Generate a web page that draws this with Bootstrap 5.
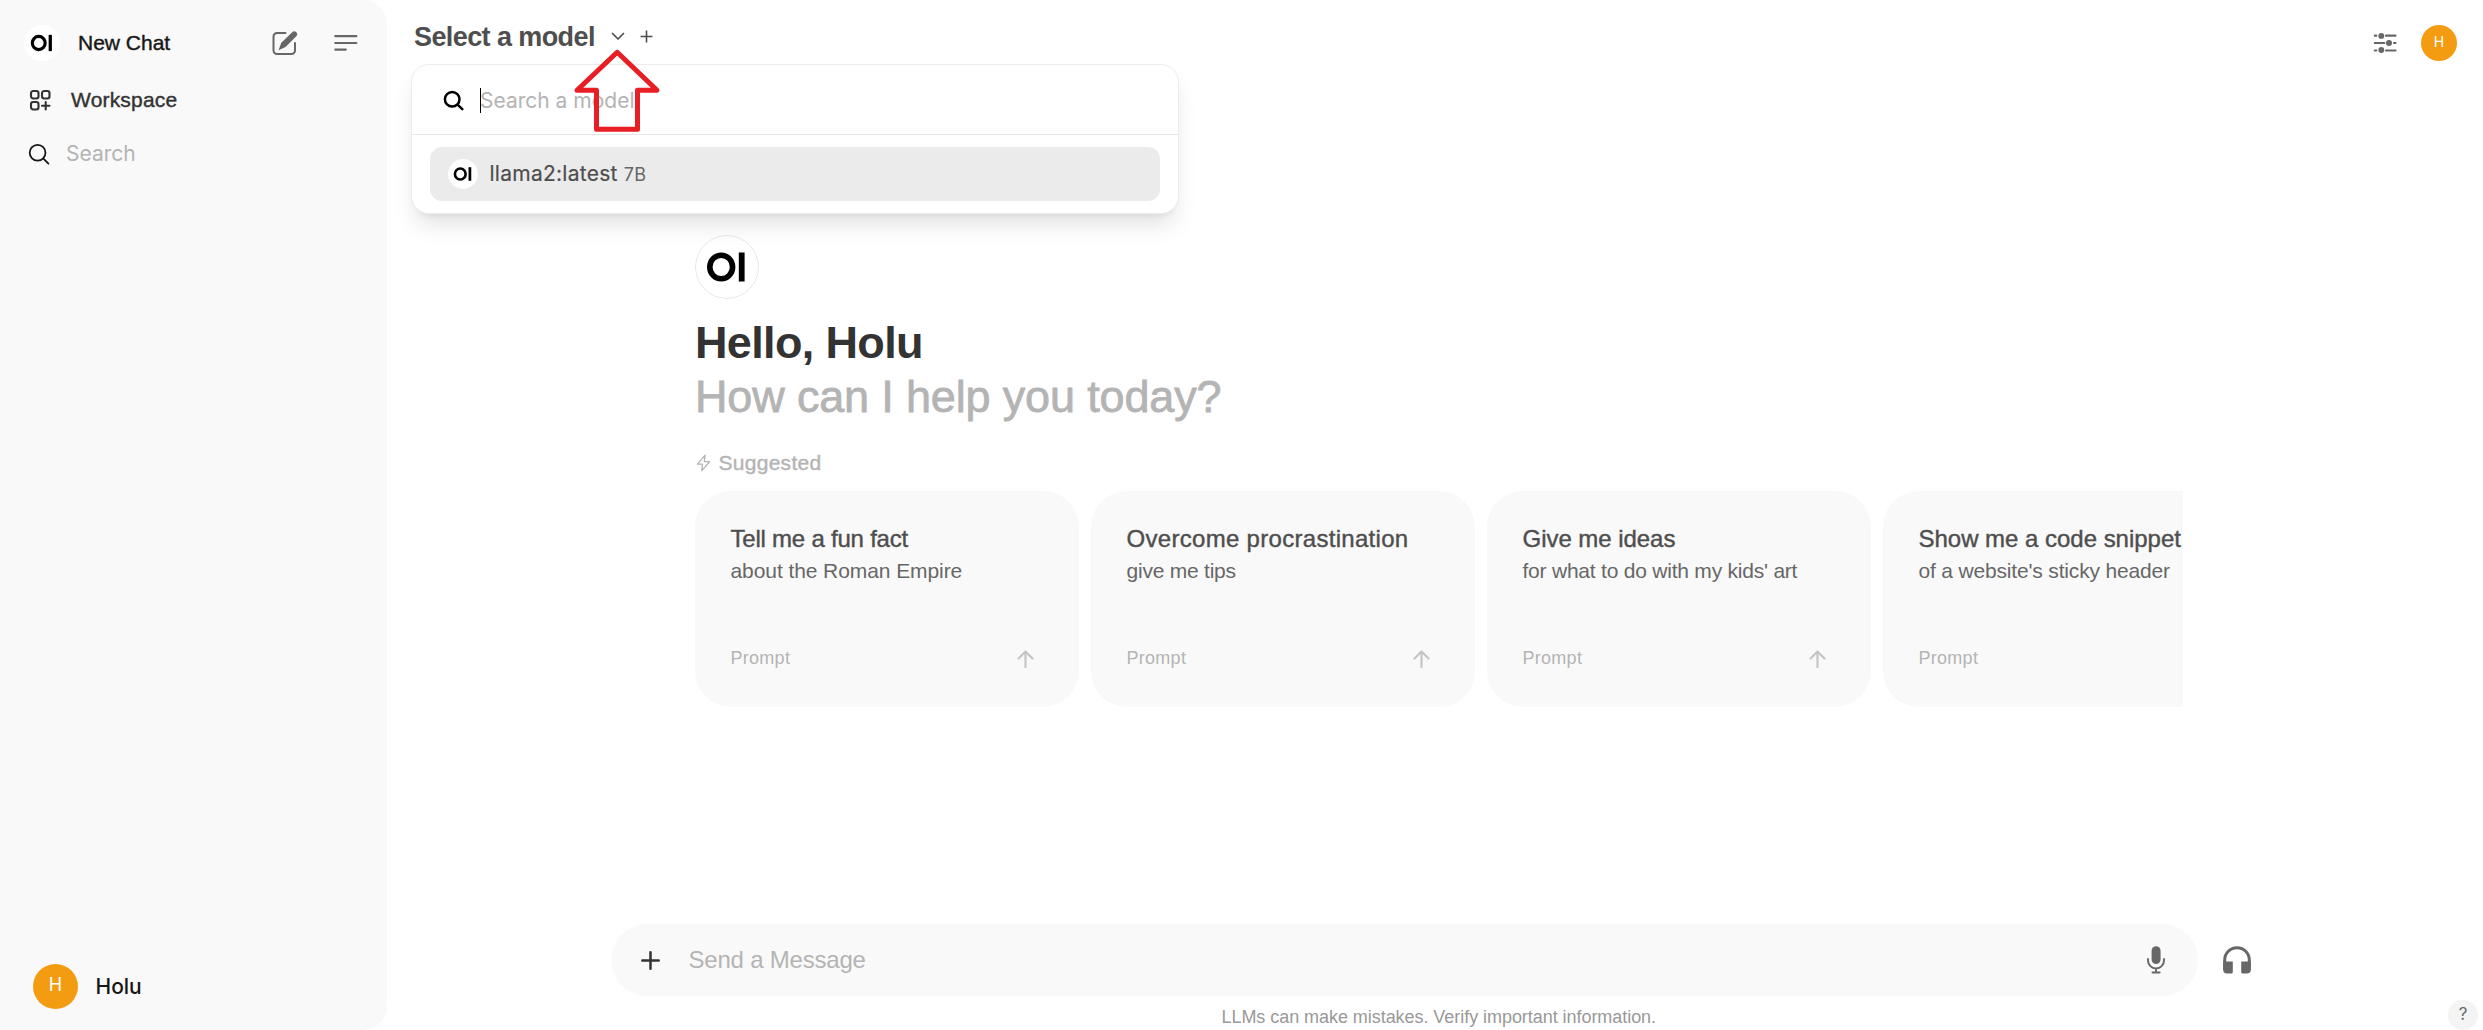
<!DOCTYPE html>
<html lang="en">
<head>
<meta charset="utf-8">
<title>New Chat</title>
<link href="https://cdn.jsdelivr.net/npm/bootstrap@5.3.0/dist/css/bootstrap.min.css" rel="stylesheet">
<style>
body{font-family:"Liberation Sans",Arial,sans-serif;font-size:21px;line-height:30px;color:#171717;background:#fff;height:100vh;overflow:hidden}
svg{display:block;flex:none}
.inter{font-family:Inter,sans-serif}
.semi{-webkit-text-stroke:.4px currentColor}
.side{width:387px;background:#f9f9f9;border-radius:0 24px 24px 0;padding:16px 0 21px}
.side-row{height:54px}
.main-col{min-width:0}
.logo{border-radius:50%;background:#fff}
.avatar{border-radius:50%;background:#f39c12;color:#fff;font-family:Inter,sans-serif;flex:none}
.avatar-lg{width:45px;height:45px;font-size:18px;padding-bottom:3px}
.avatar-sm{width:36px;height:36px;font-size:14px;padding-bottom:3px}
.muted{color:#b4b4b4}
.top-bar{height:73px;padding-left:27px;padding-right:26px}
.model-title{font-size:27px;font-weight:700;letter-spacing:-.59px;color:#4e4e4e}
.model-menu{position:absolute;left:24px;top:64px;width:768px;height:150px;border:1px solid #ececec;border-radius:18px;background:#fff;box-shadow:0 15px 23px -4px rgba(0,0,0,.11),0 6px 9px -6px rgba(0,0,0,.1);z-index:5}
.model-search{height:70px;border-bottom:1px solid #e6e6e6;padding:2px 0 0 31px}
.caret{width:1px;height:25px;background:#000}
.model-item{margin:12px 18px 0 18px;height:54px;border-radius:12px;background:#ebebeb;padding-left:18px;color:#4e4e4e}
.callout{position:absolute;left:183px;top:46px;z-index:6}
.content{margin:162px 0 0 308px;width:1488px}
.hello{font-size:45px;line-height:54px}
.hello-1{font-weight:700;letter-spacing:-.65px;color:#333}
.hello-2{letter-spacing:-.16px;-webkit-text-stroke:.8px currentColor}
.prompt-card{width:384px;height:216px;border-radius:36px;background:#f9f9f9;padding:30px 35px 35px 35.500px;flex:none}
.prompt-title{font-size:24px;line-height:35px;color:#4e4e4e}
.prompt-sub{color:#676767}
.prompt-foot{font-size:18px;line-height:27px;letter-spacing:.28px}
.prompt-foot svg{margin-right:10px}
.composer{width:1587px;height:72px;border-radius:36px;background:#f9f9f9;padding:0 33px 0 30px;font-size:24px}
.note{font-size:18px;line-height:27px;letter-spacing:-.05px;color:#999;height:34px;padding-top:8px;margin-left:834.500px}
.help{position:absolute;right:5px;bottom:0;width:30px;height:30px;border-radius:50%;background:#f4f4f4;color:#676767;font-size:17px;padding-bottom:2px}
</style>
</head>
<body class="d-flex">
<svg width="0" height="0" class="position-absolute">
  <symbol id="oi" viewBox="0 0 64 64"><ellipse cx="26.2" cy="32" rx="11.4" ry="11.8" fill="none" stroke="#000" stroke-width="5.6"/><rect x="43.8" y="17.5" width="5.8" height="29" fill="#000"/></symbol>
  <symbol id="up" viewBox="0 0 17 18"><path d="M8.500 17V1.800M1.500 8.500l7-7 7 7" fill="none" stroke="#c4c4c4" stroke-width="2.1" stroke-linecap="round" stroke-linejoin="round"/></symbol>
</svg>

<aside class="side d-flex flex-column flex-shrink-0">
  <div class="side-row d-flex align-items-center">
    <svg class="logo" style="margin-left:24px" width="36" height="36"><use href="#oi"/></svg>
    <span class="semi" style="margin-left:18px">New Chat</span>
    <svg class="ms-auto" style="margin-right:36px" width="26" height="26" viewBox="0 0 26 26"><path d="M13.500 3H5a3.500 3.500 0 0 0-3.500 3.500v14A3.500 3.500 0 0 0 5 24h14.500a3.500 3.500 0 0 0 3.500-3.500V13" fill="none" stroke="#676767" stroke-width="2" stroke-linecap="round"/><path d="M20.200 2.200a2.900 2.900 0 0 1 4.100 4.100L13.500 17 6.500 20.200l2.800-7.400z" fill="#676767"/></svg>
    <svg style="margin-right:29px" width="24" height="18" viewBox="0 0 24 18"><path d="M1.300 2.200h21M1.300 9h21M1.300 15.600h10.500" stroke="#676767" stroke-width="2.200" stroke-linecap="round"/></svg>
  </div>
  <div class="side-row d-flex align-items-center" style="margin-top:3px">
    <svg style="margin-left:29px" width="22" height="22" viewBox="0 0 22 22" fill="none" stroke="#333" stroke-width="2.100" stroke-linecap="round"><rect x="2" y="2" width="7.500" height="7.500" rx="2.200"/><rect x="13" y="2" width="7.500" height="7.500" rx="2.200"/><rect x="2" y="13" width="7.500" height="7.500" rx="2.200"/><path d="M16.700 13v7.500M13 16.700h7.500"/></svg>
    <span class="semi" style="margin-left:20px;letter-spacing:.19px;color:#333">Workspace</span>
  </div>
  <div class="side-row d-flex align-items-center">
    <svg style="margin-left:28px" width="22" height="22" viewBox="0 0 22 22" fill="none" stroke="#171717" stroke-width="1.800" stroke-linecap="round"><circle cx="9.600" cy="9.800" r="7.900"/><path d="M15.400 15.600l5 5"/></svg>
    <span class="inter muted" style="margin-left:16px">Search</span>
  </div>
  <div class="mt-auto d-flex align-items-center">
    <div class="avatar avatar-lg d-flex align-items-center justify-content-center" style="margin-left:33px">H</div>
    <span class="inter" style="font-weight:500;margin-left:17.500px">Holu</span>
  </div>
</aside>

<main class="main-col flex-grow-1 d-flex flex-column position-relative">
  <header class="top-bar d-flex align-items-center">
    <span class="model-title">Select a model</span>
    <svg style="margin-left:16px" width="14" height="9" viewBox="0 0 14 9"><path d="M1.500 1.500L7 7l5.500-5.500" fill="none" stroke="#4e4e4e" stroke-width="1.700" stroke-linecap="round" stroke-linejoin="round"/></svg>
    <svg style="margin-left:15px" width="13" height="13" viewBox="0 0 13 13"><path d="M6.500 .5v12M.5 6.500h12" stroke="#4e4e4e" stroke-width="1.600"/></svg>
    <div class="ms-auto d-flex align-items-center" style="padding-top:13px">
      <svg style="margin-right:24px" width="24" height="20" viewBox="0 0 24 20" stroke="#676767" stroke-width="2.200" stroke-linecap="round" fill="#676767"><path d="M1.800 2.700h1.500M13 2.700h9.500M1.800 10h9.500M21 10h1.500M1.800 17.500h1.500M13 17.500h9.500"/><g stroke="none"><circle cx="8.300" cy="2.900" r="2.900"/><circle cx="16" cy="10" r="3"/><circle cx="8.300" cy="17" r="2.900"/></g></svg>
      <div class="avatar avatar-sm d-flex align-items-center justify-content-center">H</div>
    </div>
  </header>

  <div class="model-menu">
    <div class="model-search d-flex align-items-center">
      <svg width="21" height="21" viewBox="0 0 21 21" fill="none" stroke="#000" stroke-width="2.500" stroke-linecap="round"><circle cx="9.200" cy="9.200" r="7.300"/><path d="M14.800 14.800l4.500 4.300"/></svg>
      <span class="caret" style="margin-left:16px"></span>
      <span class="inter muted" style="margin-left:-1px">Search a model</span>
    </div>
    <div class="model-item inter d-flex align-items-center">
      <svg class="logo" width="30" height="30"><use href="#oi"/></svg>
      <span style="margin-left:11.500px;letter-spacing:.26px;-webkit-text-stroke:.2px currentColor">llama2:latest</span>
      <span style="margin-left:6px;font-size:18px;letter-spacing:.5px;padding-top:2px;color:#676767">7B</span>
    </div>
  </div>
  <svg class="callout" width="96" height="90" viewBox="0 0 96 90"><path d="M47.200 6.300L87 44.300H67.500V83.300H26.500V44.300H7Z" fill="none" stroke="#e81e25" stroke-width="5" stroke-linejoin="round"/></svg>

  <section class="content">
    <svg class="logo" width="64" height="64"><use href="#oi"/><circle cx="32" cy="32" r="31.500" fill="none" stroke="#e3e3e3"/></svg>
    <div class="hello hello-1" style="margin-top:17px">Hello, Holu</div>
    <div class="hello hello-2 muted">How can I help you today?</div>
    <div class="d-flex align-items-center muted" style="margin:24px 0 13px 1px">
      <svg width="15" height="18" viewBox="0 0 15 18"><path d="M9 1.200L1.500 10.200h5L5.800 16.600 13.500 7.700H8.300z" fill="none" stroke="#b4b4b4" stroke-width="1.300" stroke-linejoin="round"/></svg>
      <span class="semi" style="margin-left:7.500px;letter-spacing:.28px">Suggested</span>
    </div>
    <div class="d-flex overflow-hidden text-nowrap" style="gap:12px">
      <div class="prompt-card d-flex flex-column">
        <div class="prompt-title semi" style="letter-spacing:-.22px">Tell me a fun fact</div>
        <div class="prompt-sub" style="letter-spacing:-.08px">about the Roman Empire</div>
        <div class="prompt-foot muted mt-auto d-flex align-items-center justify-content-between">Prompt<svg width="17" height="18"><use href="#up"/></svg></div>
      </div>
      <div class="prompt-card d-flex flex-column">
        <div class="prompt-title semi" style="letter-spacing:.3px">Overcome procrastination</div>
        <div class="prompt-sub" style="letter-spacing:-.23px">give me tips</div>
        <div class="prompt-foot muted mt-auto d-flex align-items-center justify-content-between">Prompt<svg width="17" height="18"><use href="#up"/></svg></div>
      </div>
      <div class="prompt-card d-flex flex-column">
        <div class="prompt-title semi" style="letter-spacing:-.04px">Give me ideas</div>
        <div class="prompt-sub" style="letter-spacing:-.22px">for what to do with my kids' art</div>
        <div class="prompt-foot muted mt-auto d-flex align-items-center justify-content-between">Prompt<svg width="17" height="18"><use href="#up"/></svg></div>
      </div>
      <div class="prompt-card d-flex flex-column">
        <div class="prompt-title semi" style="letter-spacing:-.02px">Show me a code snippet</div>
        <div class="prompt-sub" style="letter-spacing:-.17px">of a website's sticky header</div>
        <div class="prompt-foot muted mt-auto d-flex align-items-center justify-content-between">Prompt<svg width="17" height="18"><use href="#up"/></svg></div>
      </div>
    </div>
  </section>

  <footer class="mt-auto">
    <div class="d-flex align-items-center" style="margin-left:224px">
      <div class="composer d-flex align-items-center">
        <svg width="19" height="19" viewBox="0 0 19 19"><path d="M9.500 1.300v16.400M1.300 9.500h16.400" stroke="#333" stroke-width="2.500" stroke-linecap="round"/></svg>
        <span class="muted" style="margin-left:28.500px;letter-spacing:-.21px">Send a Message</span>
        <svg class="ms-auto" width="18" height="28" viewBox="0 0 18 28"><rect x="4.600" y=".3" width="9" height="17.800" rx="4.500" fill="#676767"/><path d="M1 13v1.500a8 8 0 0 0 16 0V13M9 22.500v4M5.500 26.500h7.200" fill="none" stroke="#676767" stroke-width="1.900" stroke-linecap="round"/></svg>
      </div>
      <svg style="margin-left:25px" width="28" height="28" viewBox="0 0 28 28"><path d="M1.700 24V14a12.300 12.300 0 0 1 24.600 0v10" fill="none" stroke="#676767" stroke-width="3"/><path d="M.2 15.500h9.600V26a1.500 1.500 0 0 1-1.500 1.500H4A3.800 3.800 0 0 1 .2 23.700zM27.800 15.500h-9.600V26a1.500 1.500 0 0 0 1.500 1.500H24a3.800 3.800 0 0 0 3.800-3.800z" fill="#676767"/></svg>
    </div>
    <div class="note">LLMs can make mistakes. Verify important information.</div>
  </footer>
  <div class="help inter d-flex align-items-center justify-content-center">?</div>
</main>
<script src="https://cdn.jsdelivr.net/npm/bootstrap@5.3.0/dist/js/bootstrap.bundle.min.js"></script>
</body>
</html>
